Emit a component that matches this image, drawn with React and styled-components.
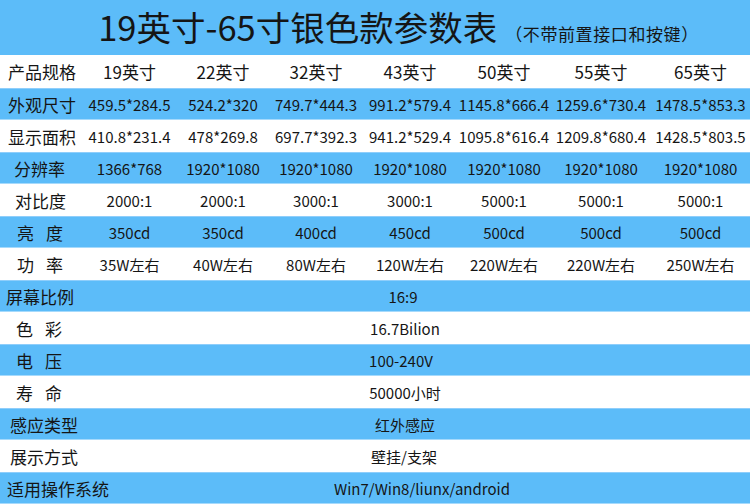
import React from "react";
import styled, { createGlobalStyle } from "styled-components";

const GlobalStyle = createGlobalStyle`
  html, body {
    margin: 0;
    padding: 0;
    background: #fff;
  }
  body {
    font-family: "Noto Sans CJK SC", "Noto Sans", sans-serif;
    color: #151515;
  }
`;

const Page = styled.div`
  width: 750px;
  height: 504px;
  overflow: hidden;
  display: flex;
  flex-direction: column;
`;

const TitleBar = styled.div`
  height: 55px;
  background: #5cbcf9;
  display: flex;
  align-items: baseline;
  justify-content: center;
  padding-left: 47px;
  box-sizing: border-box;

  .main {
    font-size: 34.5px;
    line-height: 53px;
  }

  .note {
    font-size: 17px;
    letter-spacing: 0.6px;
    margin-left: 8px;
  }
`;

const Row = styled.div`
  height: ${p => p.$h || 32}px;
  box-sizing: border-box;
  display: grid;
  grid-template-columns: 82px 95px 92px 94px 94px 94px 100px 99px;
  align-items: center;
  background: ${p => (p.$blue ? "#5cbcf9" : "#fff")};
  border-top: 1px solid ${p => (p.$blue ? "#8fcefb" : "#fff")};
  border-bottom: 1px solid ${p => (p.$blue ? "#a6dafc" : "#fff")};
`;

const Label = styled.div`
  font-size: 17px;
  padding-left: ${p => p.$indent || 8}px;
  letter-spacing: ${p => p.$spread || 0}px;
  white-space: nowrap;
`;

const Value = styled.div`
  font-size: ${p => p.$size || 15}px;
  text-align: center;
  white-space: nowrap;
`;

const Wide = styled.div`
  grid-column: 2 / -1;
  font-size: 15px;
  text-align: center;
  padding-right: ${p => p.$pr ?? 22}px;
  padding-left: ${p => p.$pl || 0}px;
  white-space: nowrap;
`;

const sizes = ["19英寸", "22英寸", "32英寸", "43英寸", "50英寸", "55英寸", "65英寸"];

const rows = [
  {
    label: "外观尺寸",
    values: ["459.5*284.5", "524.2*320", "749.7*444.3", "991.2*579.4", "1145.8*666.4", "1259.6*730.4", "1478.5*853.3"]
  },
  {
    label: "显示面积",
    values: ["410.8*231.4", "478*269.8", "697.7*392.3", "941.2*529.4", "1095.8*616.4", "1209.8*680.4", "1428.5*803.5"]
  },
  {
    label: "分辨率",
    indent: 14,
    values: ["1366*768", "1920*1080", "1920*1080", "1920*1080", "1920*1080", "1920*1080", "1920*1080"]
  },
  {
    label: "对比度",
    indent: 15,
    values: ["2000:1", "2000:1", "3000:1", "3000:1", "5000:1", "5000:1", "5000:1"]
  },
  {
    label: "亮度",
    indent: 17,
    spread: 12,
    values: ["350cd", "350cd", "400cd", "450cd", "500cd", "500cd", "500cd"]
  },
  {
    label: "功率",
    indent: 17,
    spread: 12,
    values: ["35W左右", "40W左右", "80W左右", "120W左右", "220W左右", "220W左右", "250W左右"]
  }
];

const wideRows = [
  { label: "屏幕比例", indent: 6, value: "16:9", pr: 26 },
  { label: "色彩", indent: 16, spread: 12, value: "16.7Bilion" },
  { label: "电压", indent: 16, spread: 12, value: "100-240V", pr: 30 },
  { label: "寿命", indent: 16, spread: 12, value: "50000小时" },
  { label: "感应类型", indent: 10, value: "红外感应" },
  { label: "展示方式", indent: 10, value: "壁挂/支架", pr: 24 },
  { label: "适用操作系统", indent: 7, value: "Win7/Win8/liunx/android", pr: 0, pl: 12 }
];

const App = () => {
  return (
    <Page>
      <GlobalStyle />
      <TitleBar>
        <span className="main">19英寸-65寸银色款参数表</span>
        <span className="note">（不带前置接口和按键）</span>
      </TitleBar>

      <Row $h={33}>
        <Label>产品规格</Label>
        {sizes.map(s => (
          <Value key={s} $size={17}>
            {s}
          </Value>
        ))}
      </Row>

      {rows.map((r, i) => (
        <Row key={r.label} $blue={i % 2 === 0}>
          <Label $indent={r.indent} $spread={r.spread}>
            {r.label}
          </Label>
          {r.values.map((v, j) => (
            <Value key={j}>{v}</Value>
          ))}
        </Row>
      ))}

      {wideRows.map((r, i) => (
        <Row key={r.label} $blue={i % 2 === 0}>
          <Label $indent={r.indent} $spread={r.spread}>
            {r.label}
          </Label>
          <Wide $pr={r.pr} $pl={r.pl}>
            {r.value}
          </Wide>
        </Row>
      ))}
    </Page>
  );
};

export default App;
